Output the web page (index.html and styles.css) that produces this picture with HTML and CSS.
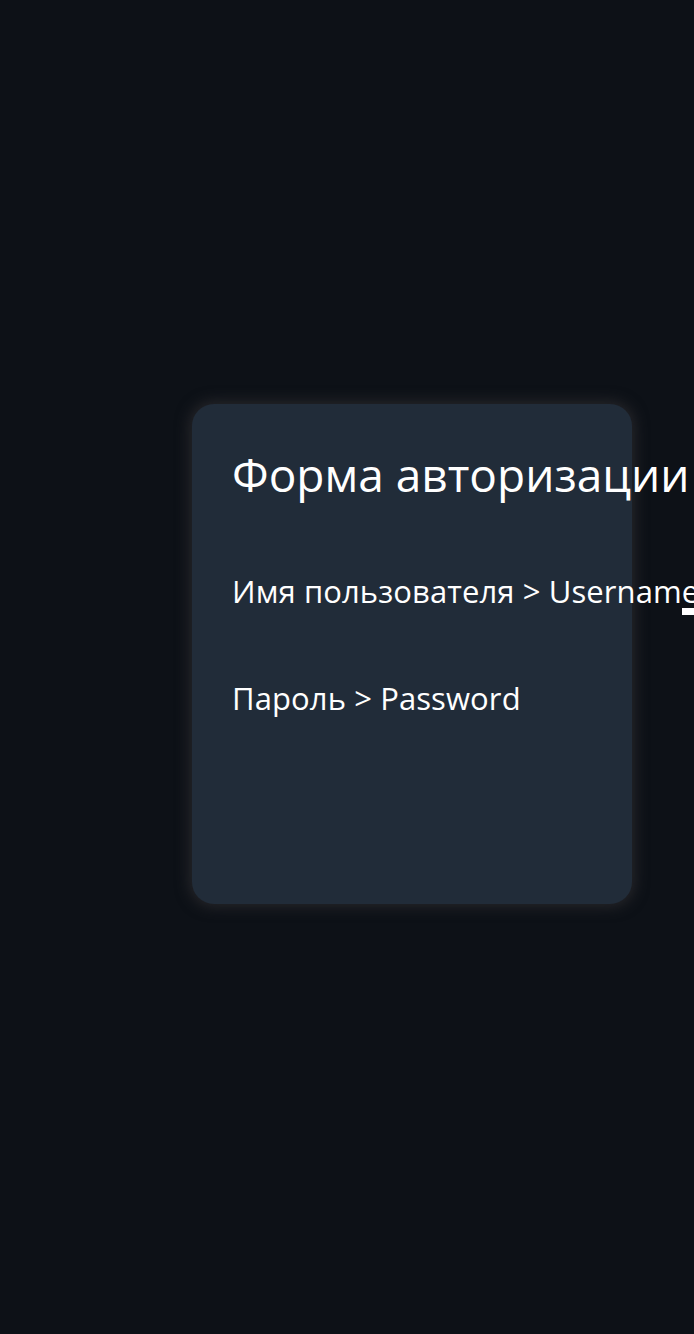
FILE: index.html
```html
<!DOCTYPE html>
<html lang="ru">
<head>
<meta charset="utf-8">
<title>Форма авторизации</title>
<link rel="stylesheet" href="styles.css">
</head>
<body>
<main class="page">
  <form class="card">
    <h1 class="title">Форма авторизации</h1>
    <div class="field">
      <label class="label">Имя пользователя &gt; Username</label><span class="input"></span>
    </div>
    <div class="field">
      <label class="label">Пароль &gt; Password</label>
    </div>
  </form>
</main>
</body>
</html>
```
FILE: styles.css
```css
html, body {
  margin: 0;
  padding: 0;
  background: #0d1117;
  overflow: hidden;
}
body {
  width: 694px;
  height: 1334px;
  font-family: "Open Sans", "Noto Sans", sans-serif;
  color: #ffffff;
}
.page {
  display: flex;
  padding: 404px 0 0 192px;
}
.card {
  width: 440px;
  height: 500px;
  box-sizing: border-box;
  padding: 38px 40px 40px;
  background: #212c39;
  border-radius: 22px;
  box-shadow: 0 0 14px 3px #26262a;
  flex-shrink: 0;
}
.title {
  margin: 0;
  font-weight: 400;
  font-size: 46px;
  line-height: 64px;
  white-space: nowrap;
}
.field {
  display: flex;
  align-items: flex-end;
  white-space: nowrap;
  margin-top: 61px;
}
.field + .field {
  margin-top: 59px;
}
.label {
  flex-shrink: 0;
  font-size: 31px;
  line-height: 48px;
  letter-spacing: 0.1px;
}
.input {
  display: block;
  flex-shrink: 0;
  width: 60px;
  height: 7px;
  margin: 0 0 0 -17px;
  background: #ffffff;
}
```
